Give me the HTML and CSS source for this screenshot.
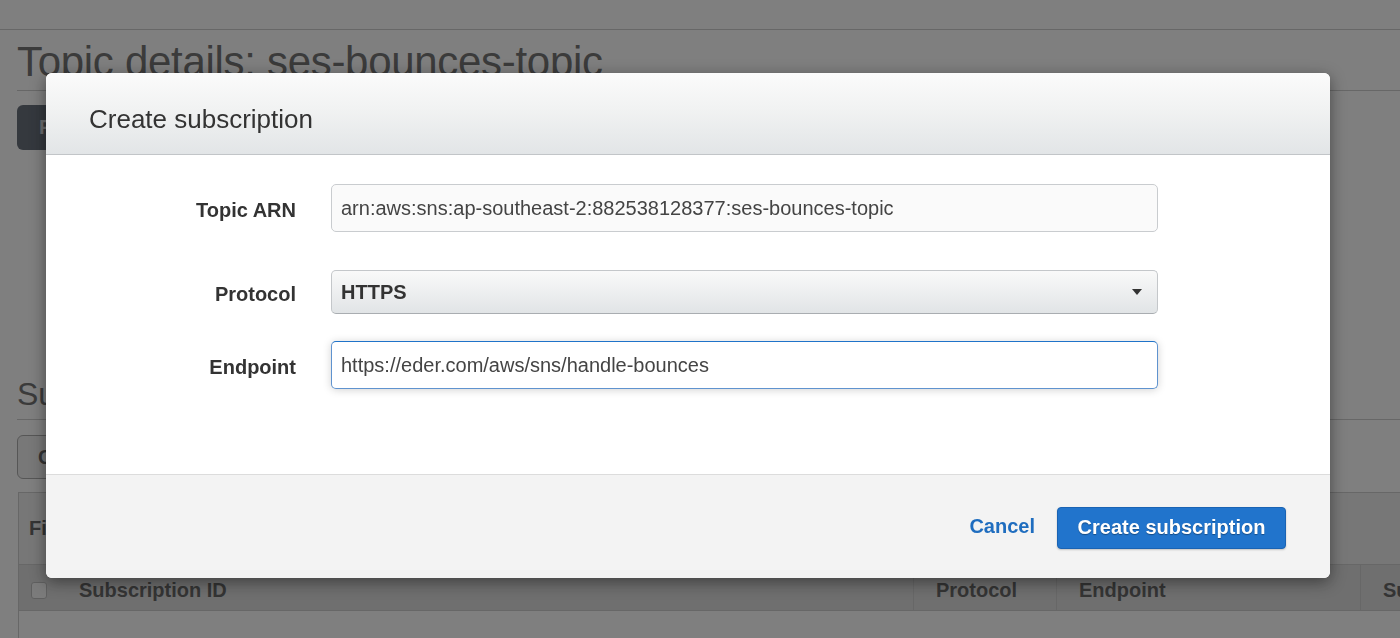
FILE: index.html
```html
<!DOCTYPE html>
<html lang="en">
<head>
<meta charset="utf-8">
<title>Topic details: ses-bounces-topic</title>
<link rel="stylesheet" href="styles.css">
</head>
<body>
<div class="page">
  <div class="topbar"></div>
  <div class="title-row">
    <h1 class="page-title">Topic details: ses-bounces-topic</h1>
  </div>
  <div class="actions">
    <button class="btn-dark">Publish to topic</button>
  </div>
  <div class="details-spacer"></div>
  <div class="section-head">
    <h2 class="section-title">Subscriptions</h2>
  </div>
  <div class="actions-2">
    <button class="btn-outline">Create subscription</button>
  </div>
  <div class="table-panel">
    <div class="filter-bar"><span class="filter-label">Filter</span></div>
    <div class="table-head">
      <div class="th th-check"><span class="checkbox"></span></div>
      <div class="th">Subscription ID</div>
      <div class="th">Protocol</div>
      <div class="th">Endpoint</div>
      <div class="th">Subscriber</div>
    </div>
    <div class="table-body"></div>
  </div>
</div>

<div class="backdrop"></div>

<div class="modal" role="dialog">
  <div class="modal-header">
    <h3 class="modal-title">Create subscription</h3>
  </div>
  <div class="modal-body">
    <div class="form-row">
      <label class="form-label">Topic ARN</label>
      <div class="field field-readonly">arn:aws:sns:ap-southeast-2:882538128377:ses-bounces-topic</div>
    </div>
    <div class="form-row row-protocol">
      <label class="form-label">Protocol</label>
      <div class="field field-select"><span class="select-value">HTTPS</span><span class="caret"></span></div>
    </div>
    <div class="form-row row-endpoint">
      <label class="form-label">Endpoint</label>
      <div class="field field-focus">https://eder.com/aws/sns/handle-bounces</div>
    </div>
  </div>
  <div class="modal-footer">
    <a class="link-cancel">Cancel</a>
    <button class="btn-primary">Create subscription</button>
  </div>
</div>
</body>
</html>
```

FILE: styles.css
```css
html, body {
  margin: 0;
  padding: 0;
  width: 1400px;
  height: 638px;
  overflow: hidden;
  background: #ffffff;
  font-family: "Liberation Sans", Arial, Helvetica, sans-serif;
}

.page {
  padding-left: 17px;
  width: 1500px;
}

.topbar {
  height: 29px;
  border-bottom: 1px solid #c4c4c4;
  margin-left: -17px;
}

.title-row {
  padding-top: 7px;
  padding-bottom: 4px;
  border-bottom: 1px solid #c4c4c4;
}

.page-title {
  margin: 0;
  font-size: 42px;
  line-height: 49px;
  font-weight: normal;
  color: #555555;
  letter-spacing: -0.3px;
}

.actions {
  padding-top: 14px;
}

.btn-dark {
  height: 45px;
  padding: 0 22px;
  border: none;
  border-radius: 6px;
  background: #46505e;
  color: #cfd2d6;
  font-family: inherit;
  font-size: 20px;
  font-weight: bold;
}

.details-spacer {
  height: 225px;
}

.section-head {
  padding-bottom: 6px;
  border-bottom: 1px solid #c4c4c4;
}

.section-title {
  margin: 0;
  font-size: 32px;
  line-height: 38px;
  font-weight: normal;
  color: #555555;
}

.actions-2 {
  padding-top: 15px;
}

.btn-outline {
  height: 44px;
  padding: 0 20px;
  border: 1px solid #9a9a9a;
  border-radius: 6px;
  background: #eeeeee;
  color: #444444;
  font-family: inherit;
  font-size: 20px;
  font-weight: bold;
}

.table-panel {
  margin-top: 13px;
  margin-left: 1px;
  border: 1px solid #c4c4c4;
}

.filter-bar {
  height: 71px;
  display: flex;
  align-items: center;
  padding-left: 10px;
  background: #ececec;
  border-bottom: 1px solid #c4c4c4;
}

.filter-label {
  font-size: 20px;
  font-weight: bold;
  color: #444444;
}

.table-head {
  display: grid;
  grid-template-columns: 40px 854px 143px 304px 300px;
  height: 45px;
  background: #d6d6d6;
  border-bottom: 1px solid #c4c4c4;
}

.th {
  display: flex;
  align-items: center;
  padding-left: 22px;
  padding-top: 6px;
  font-size: 20px;
  font-weight: bold;
  color: #454545;
  border-left: 1px solid #c4c4c4;
}

.th-check {
  padding-left: 12px;
  border-left: none;
}

.th-check + .th {
  border-left: none;
  padding-left: 20px;
}

.checkbox {
  width: 14px;
  height: 15px;
  border-radius: 3px;
  background: #f4f4f4;
  border: 1px solid #b0b0b0;
}

.table-body {
  height: 120px;
  background: #ffffff;
}

/* backdrop dims the page behind the dialog */
.backdrop {
  position: fixed;
  inset: 0;
  background: rgba(42, 42, 42, 0.6);
}

.modal {
  position: fixed;
  left: 46px;
  top: 73px;
  width: 1284px;
  height: 505px;
  display: flex;
  flex-direction: column;
  background: #ffffff;
  border-radius: 6px;
  overflow: hidden;
  box-shadow: 0 4px 16px rgba(0, 0, 0, 0.45);
}

.modal-header {
  height: 82px;
  flex: none;
  display: flex;
  align-items: center;
  padding: 10px 43px 0;
  box-sizing: border-box;
  background: linear-gradient(to bottom, #fbfbfb 0%, #f1f2f2 45%, #e2e5e7 100%);
  border-bottom: 1px solid #c2c5c8;
}

.modal-title {
  margin: 0;
  font-size: 26px;
  font-weight: normal;
  color: #333333;
  line-height: 32px;
}

.modal-body {
  flex: 1;
  padding-top: 29px;
  display: flex;
  flex-direction: column;
}

.form-row {
  display: flex;
  align-items: center;
}

.row-protocol {
  margin-top: 38px;
}

.row-endpoint {
  margin-top: 27px;
}

.form-label {
  width: 250px;
  text-align: right;
  padding-right: 35px;
  padding-top: 5px;
  font-size: 20px;
  font-weight: bold;
  color: #333333;
}

.field {
  width: 827px;
  box-sizing: border-box;
  display: flex;
  align-items: center;
  padding: 0 9px;
  font-size: 20px;
  color: #444444;
  border-radius: 5px;
  white-space: nowrap;
}

.field-readonly {
  height: 48px;
  background: #fafafa;
  border: 1px solid #c9cccf;
}

.field-select {
  height: 44px;
  justify-content: space-between;
  background: linear-gradient(to bottom, #f9f9f9 0%, #eceeef 55%, #e1e4e6 100%);
  border: 1px solid #c4c7ca;
  border-bottom-color: #a9adb1;
  padding-right: 15px;
}

.select-value {
  font-weight: bold;
  color: #333333;
}

.caret {
  width: 0;
  height: 0;
  border-left: 5.5px solid transparent;
  border-right: 5.5px solid transparent;
  border-top: 6px solid #333333;
}

.field-focus {
  height: 48px;
  background: #ffffff;
  border: 1px solid #5f93cf;
  border-top-color: #1f73c9;
  box-shadow: 0 1px 8px rgba(0, 0, 0, 0.18);
}

.modal-footer {
  height: 104px;
  flex: none;
  box-sizing: border-box;
  display: flex;
  align-items: center;
  justify-content: flex-end;
  gap: 22px;
  padding: 2px 44px 0 0;
  background: #f3f3f3;
  border-top: 1px solid #dcdcdc;
}

.link-cancel {
  font-size: 20px;
  font-weight: bold;
  color: #1f6dbf;
  cursor: pointer;
  margin-top: -3px;
}

.btn-primary {
  width: 229px;
  height: 42px;
  border: 1px solid #1a63b3;
  border-radius: 4px;
  background: #2174cc;
  color: #ffffff;
  font-family: inherit;
  font-size: 20px;
  font-weight: bold;
  text-shadow: 0 1px 1px rgba(0, 0, 0, 0.35);
  box-shadow: 0 1px 2px rgba(0, 0, 0, 0.2);
}
```
